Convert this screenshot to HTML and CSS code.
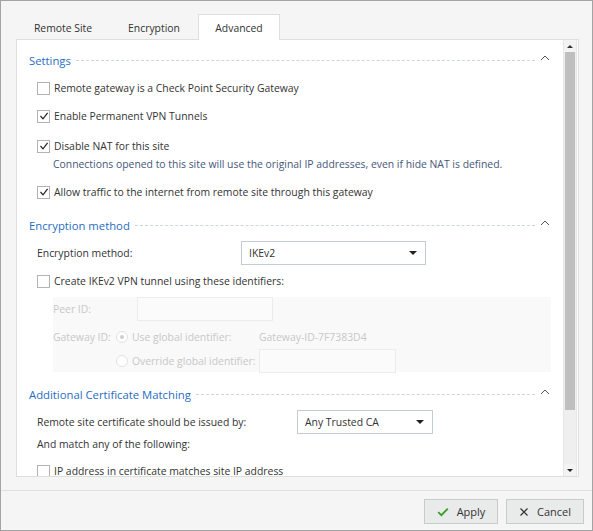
FILE: index.html
```html
<!DOCTYPE html>
<html>
<head>
<meta charset="utf-8">
<link rel="stylesheet" href="styles.css">
</head>
<body>
<div class="window">
  <div class="tabs">
    <div class="tab t1">Remote Site</div>
    <div class="tab t2">Encryption</div>
    <div class="tab t3 active">Advanced</div>
  </div>
  <div class="panel">
    <div class="content">
      <div class="section-head first">
        <span class="title">Settings</span><span class="dash"></span>
        <svg class="chev" width="12" height="8" viewBox="0 0 12 8"><path d="M2 6 L6 2 L10 6" fill="none" stroke="#555" stroke-width="1"/></svg>
      </div>
      <div class="row cb-row r1"><span class="cb"></span><span>Remote gateway is a Check Point Security Gateway</span></div>
      <div class="row cb-row r2"><span class="cb"><svg width="10" height="10" viewBox="0 0 10 10"><path d="M1.5 5 L4 7.8 L8.6 1.8" fill="none" stroke="#222" stroke-width="1.2"/></svg></span><span>Enable Permanent VPN Tunnels</span></div>
      <div class="r3">
        <div class="row cb-row short"><span class="cb"><svg width="10" height="10" viewBox="0 0 10 10"><path d="M1.5 5 L4 7.8 L8.6 1.8" fill="none" stroke="#222" stroke-width="1.2"/></svg></span><span>Disable NAT for this site</span></div>
        <div class="desc">Connections opened to this site will use the original IP addresses, even if hide NAT is defined.</div>
      </div>
      <div class="row cb-row r4"><span class="cb"><svg width="10" height="10" viewBox="0 0 10 10"><path d="M1.5 5 L4 7.8 L8.6 1.8" fill="none" stroke="#222" stroke-width="1.2"/></svg></span><span>Allow traffic to the internet from remote site through this gateway</span></div>

      <div class="section-head enc">
        <span class="title">Encryption method</span><span class="dash"></span>
        <svg class="chev" width="12" height="8" viewBox="0 0 12 8"><path d="M2 6 L6 2 L10 6" fill="none" stroke="#555" stroke-width="1"/></svg>
      </div>
      <div class="row field-row enc-row">
        <span class="label enc-label">Encryption method:</span>
        <div class="select enc-select"><span>IKEv2</span><span class="caret"></span></div>
      </div>
      <div class="row cb-row create"><span class="cb"></span><span>Create IKEv2 VPN tunnel using these identifiers:</span></div>
      <div class="disabled-box">
        <div class="d-row peer">
          <span class="d-label">Peer ID:</span>
          <span class="d-input peer-input"></span>
        </div>
        <div class="d-row gw">
          <span class="d-label gw-label">Gateway ID:</span>
          <span class="radio on"><span class="dot"></span></span>
          <span class="r-text use">Use global identifier:</span>
          <span class="gw-id">Gateway-ID-7F7383D4</span>
        </div>
        <div class="d-row ov">
          <span class="radio ov-radio"></span>
          <span class="r-text override">Override global identifier:</span>
          <span class="d-input ov-input"></span>
        </div>
      </div>

      <div class="section-head add">
        <span class="title">Additional Certificate Matching</span><span class="dash"></span>
        <svg class="chev" width="12" height="8" viewBox="0 0 12 8"><path d="M2 6 L6 2 L10 6" fill="none" stroke="#555" stroke-width="1"/></svg>
      </div>
      <div class="row field-row cert-row">
        <span class="label cert-label">Remote site certificate should be issued by:</span>
        <div class="select cert-select"><span>Any Trusted CA</span><span class="caret"></span></div>
      </div>
      <div class="plain match">And match any of the following:</div>
      <div class="row cb-row ip"><span class="cb"></span><span>IP address in certificate matches site IP address</span></div>
    </div>
    <div class="scrollbar">
      <div class="sb-btn"><span class="up"></span></div>
      <div class="thumb"></div>
      <div class="sb-track"></div>
      <div class="sb-btn"><span class="down"></span></div>
    </div>
  </div>
  <div class="footer">
    <div class="btn apply">
      <svg width="12" height="10" viewBox="0 0 12 10"><path d="M1.2 5.2 L4.4 8.2 L10.8 1.6" fill="none" stroke="#3c9a2e" stroke-width="1.8"/></svg>
      <span>Apply</span>
    </div>
    <div class="btn cancel">
      <svg width="10" height="10" viewBox="0 0 10 10"><path d="M1.5 1.5 L8.5 8.5 M8.5 1.5 L1.5 8.5" fill="none" stroke="#333" stroke-width="1.2"/></svg>
      <span>Cancel</span>
    </div>
  </div>
</div>
</body>
</html>
```
FILE: styles.css
```css
html, body {
  margin: 0;
  padding: 0;
}
body {
  font-family: "Open Sans", "Noto Sans", sans-serif;
  font-size: 10.4px;
  color: #333;
}
.window {
  width: 593px;
  height: 531px;
  box-sizing: border-box;
  border: 1px solid #a3a3a3;
  background: #f4f5f4;
  position: relative;
  overflow: hidden;
}
.tabs {
  display: flex;
  padding-left: 15px;
  padding-top: 13px;
  height: 25px;
}
.tab {
  box-sizing: border-box;
  height: 25px;
  display: flex;
  align-items: center;
  justify-content: center;
  color: #333;
  border: 1px solid transparent;
  border-bottom: none;
  padding-top: 1px;
}
.t1 { width: 94px; }
.t2 { width: 88px; }
.t3 { width: 82px; }
.tab.active {
  background: #fff;
  border-color: #dcdfdc;
  height: 26px;
  position: relative;
  z-index: 2;
}
.panel {
  margin-left: 15px;
  width: 563px;
  height: 438px;
  box-sizing: border-box;
  border: 1px solid #dcdfdc;
  background: #fff;
  display: flex;
}
.content {
  flex: 1;
  overflow: hidden;
  padding-left: 12px;
  padding-top: 9px;
}
.section-head {
  height: 22px;
  display: flex;
  align-items: center;
  margin-right: 12px;
}
.section-head .title {
  font-size: 11.3px;
  color: #1f6dc2;
  white-space: nowrap;
  padding-right: 5px;
}
.section-head .dash {
  flex: 1;
  border-top: 1px dashed #cdd5dd;
  margin-top: 1px;
  margin-right: 4px;
}
.section-head .chev {
  display: block;
  margin-top: -4px;
}
.enc { margin-top: 10px; }
.add { margin-top: 11px; }
.row {
  display: flex;
  align-items: center;
  padding-left: 8px;
  white-space: nowrap;
}
.cb-row { height: 24px; }
.cb-row.short { height: 20px; }
.cb {
  width: 11px;
  height: 11px;
  border: 1px solid #b3b3b3;
  background: #fff;
  margin-right: 4px;
  flex: none;
  display: flex;
  align-items: center;
  justify-content: center;
}
.cb svg { display: block; }
.r1 { margin-top: 5px; }
.r2 { margin-top: 4px; }
.r3 { margin-top: 8px; }
.r4 { margin-top: 8px; }
.desc {
  padding-left: 24px;
  line-height: 16px;
  height: 16px;
  color: #46577a;
  white-space: nowrap;
}
.field-row { height: 24px; }
.enc-row { margin-top: 5px; }
.label { flex: none; }
.enc-label { width: 204px; }
.cert-label { width: 260px; }
.select {
  box-sizing: border-box;
  height: 24px;
  border: 1px solid #c6cbd0;
  background: #fff;
  display: flex;
  align-items: center;
  justify-content: space-between;
  padding: 0 8px 0 7px;
}
.enc-select { width: 185px; }
.cert-select { width: 136px; }
.caret {
  width: 0;
  height: 0;
  border-left: 4px solid transparent;
  border-right: 4px solid transparent;
  border-top: 4px solid #222;
}
.create { margin-top: 4px; }
.disabled-box {
  margin-top: 4px;
  margin-left: 24px;
  width: 498px;
  height: 75px;
  background: #f9f9f9;
  color: #c8c8c8;
  white-space: nowrap;
}
.d-row {
  display: flex;
  align-items: center;
  height: 24px;
}
.gw { margin-top: 4px; }
.d-label { flex: none; }
.peer .d-label { width: 84px; }
.gw-label { width: 63px; }
.d-input {
  box-sizing: border-box;
  height: 24px;
  border: 1px solid #ececec;
  background: #fbfbfb;
}
.peer-input { width: 136px; }
.radio {
  box-sizing: border-box;
  width: 12px;
  height: 12px;
  border-radius: 50%;
  border: 1px solid #e2e2e2;
  background: #fff;
  display: flex;
  align-items: center;
  justify-content: center;
  flex: none;
  margin-right: 4px;
}
.radio .dot {
  width: 4px;
  height: 4px;
  border-radius: 50%;
  background: #cfcfcf;
}
.ov-radio { margin-left: 63px; }
.use { width: 127px; }
.override { width: 127px; }
.ov-input { width: 137px; }
.cert-row { margin-top: 5px; }
.plain {
  padding-left: 8px;
  height: 16px;
  line-height: 16px;
  white-space: nowrap;
}
.match { margin-top: 2px; }
.ip { margin-top: 7px; }
.scrollbar {
  width: 12px;
  margin: 0 1px 0 0;
  display: flex;
  flex-direction: column;
  background: #efefef;
  border-left: 1px solid #e6e6e6;
  border-right: 1px solid #e6e6e6;
}
.sb-btn {
  height: 12px;
  display: flex;
  align-items: center;
  justify-content: center;
  background: #f3f3f3;
}
.up {
  width: 0;
  height: 0;
  border-left: 3px solid transparent;
  border-right: 3px solid transparent;
  border-bottom: 3px solid #333;
}
.down {
  width: 0;
  height: 0;
  border-left: 3px solid transparent;
  border-right: 3px solid transparent;
  border-top: 3px solid #222;
}
.thumb {
  height: 358px;
  background: #bfbfbf;
  margin: 0 1px;
}
.sb-track { flex: 1; }
.footer {
  margin-top: 13px;
  border-top: 1px solid #dedfde;
  display: flex;
  justify-content: flex-end;
  gap: 8px;
  padding: 8px 8px 0 0;
}
.btn {
  box-sizing: border-box;
  height: 25px;
  border: 1px solid #c9cbcb;
  background: #e9ebea;
  display: flex;
  align-items: center;
  justify-content: center;
  gap: 8px;
  font-size: 11px;
  color: #333;
}
.apply { width: 74px; }
.cancel { width: 78px; }
```
